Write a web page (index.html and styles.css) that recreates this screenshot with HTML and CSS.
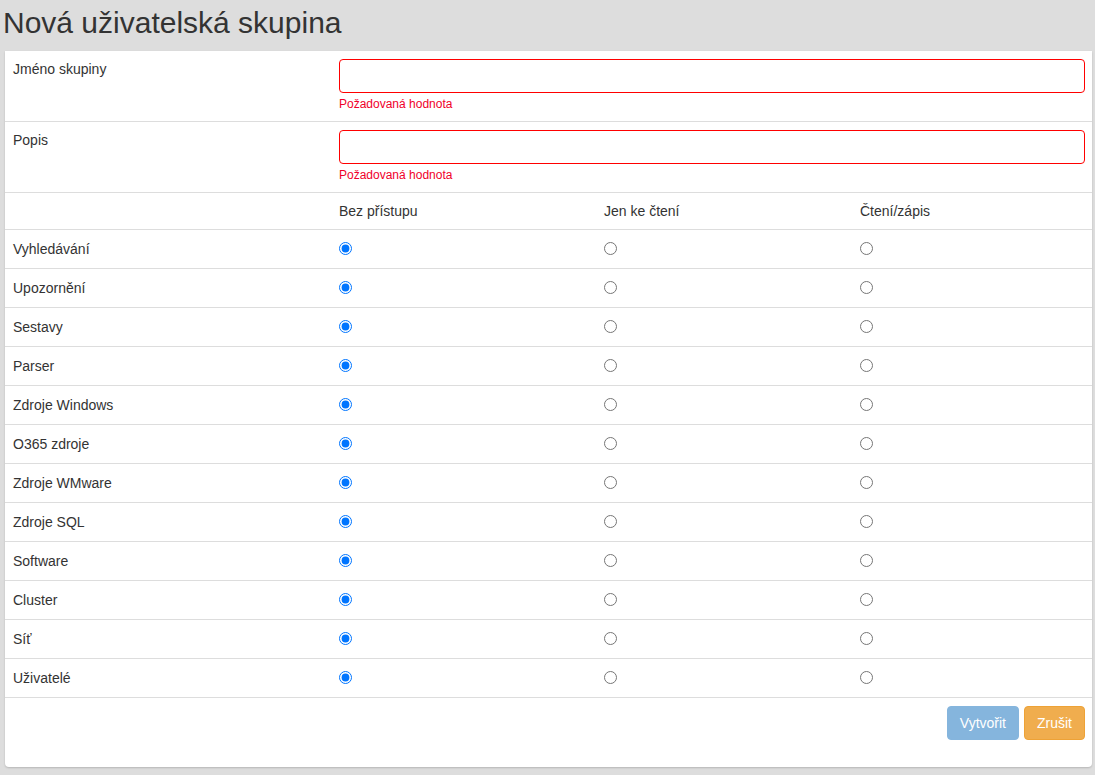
FILE: index.html
```html
<!DOCTYPE html>
<html lang="cs">
<head>
<meta charset="utf-8">
<title>Nová uživatelská skupina</title>
<link rel="stylesheet" href="styles.css">
</head>
<body>
<h1 class="page-title">Nová uživatelská skupina</h1>
<div class="card">
  <table class="grid">
    <colgroup>
      <col class="c1"><col class="c2"><col class="c3"><col class="c4">
    </colgroup>
    <tr class="field-row">
      <td class="label">Jméno skupiny</td>
      <td colspan="3" class="field">
        <input class="text-input" type="text">
        <div class="error">Požadovaná hodnota</div>
      </td>
    </tr>
    <tr class="field-row">
      <td class="label">Popis</td>
      <td colspan="3" class="field">
        <input class="text-input" type="text">
        <div class="error">Požadovaná hodnota</div>
      </td>
    </tr>
    <tr class="head-row">
      <td></td>
      <td>Bez přístupu</td>
      <td>Jen ke čtení</td>
      <td>Čtení/zápis</td>
    </tr>
    <tr class="perm-row"><td>Vyhledávání</td><td><input type="radio" name="p1" checked></td><td><input type="radio" name="p1"></td><td><input type="radio" name="p1"></td></tr>
    <tr class="perm-row"><td>Upozornění</td><td><input type="radio" name="p2" checked></td><td><input type="radio" name="p2"></td><td><input type="radio" name="p2"></td></tr>
    <tr class="perm-row"><td>Sestavy</td><td><input type="radio" name="p3" checked></td><td><input type="radio" name="p3"></td><td><input type="radio" name="p3"></td></tr>
    <tr class="perm-row"><td>Parser</td><td><input type="radio" name="p4" checked></td><td><input type="radio" name="p4"></td><td><input type="radio" name="p4"></td></tr>
    <tr class="perm-row"><td>Zdroje Windows</td><td><input type="radio" name="p5" checked></td><td><input type="radio" name="p5"></td><td><input type="radio" name="p5"></td></tr>
    <tr class="perm-row"><td>O365 zdroje</td><td><input type="radio" name="p6" checked></td><td><input type="radio" name="p6"></td><td><input type="radio" name="p6"></td></tr>
    <tr class="perm-row"><td>Zdroje WMware</td><td><input type="radio" name="p7" checked></td><td><input type="radio" name="p7"></td><td><input type="radio" name="p7"></td></tr>
    <tr class="perm-row"><td>Zdroje SQL</td><td><input type="radio" name="p8" checked></td><td><input type="radio" name="p8"></td><td><input type="radio" name="p8"></td></tr>
    <tr class="perm-row"><td>Software</td><td><input type="radio" name="p9" checked></td><td><input type="radio" name="p9"></td><td><input type="radio" name="p9"></td></tr>
    <tr class="perm-row"><td>Cluster</td><td><input type="radio" name="p10" checked></td><td><input type="radio" name="p10"></td><td><input type="radio" name="p10"></td></tr>
    <tr class="perm-row"><td>Síť</td><td><input type="radio" name="p11" checked></td><td><input type="radio" name="p11"></td><td><input type="radio" name="p11"></td></tr>
    <tr class="perm-row"><td>Uživatelé</td><td><input type="radio" name="p12" checked></td><td><input type="radio" name="p12"></td><td><input type="radio" name="p12"></td></tr>
  </table>
  <div class="actions">
    <button class="btn btn-primary" disabled>Vytvořit</button>
    <button class="btn btn-warning">Zrušit</button>
  </div>
</div>
</body>
</html>
```

FILE: styles.css
```css
html, body {
  margin: 0;
  padding: 0;
}
body {
  background: #dddddd;
  font-family: "Liberation Sans", Arial, sans-serif;
  font-size: 14px;
  color: #333333;
  padding: 0 3px 8px 5px;
}
.page-title {
  margin: 0;
  padding: 6px 0 12px 0;
  margin-left: -2px;
  font-size: 30px;
  font-weight: normal;
  line-height: 33px;
  color: #333333;
}
.card {
  background: #ffffff;
  border-radius: 0 0 4px 4px;
  box-shadow: 0 1px 2px rgba(0, 0, 0, 0.18);
}
.grid {
  width: 100%;
  border-collapse: collapse;
  table-layout: fixed;
}
.c1 { width: 326px; }
.c2 { width: 265px; }
.c3 { width: 256px; }
.c4 { width: 240px; }
.grid tr {
  border-bottom: 1px solid #dddddd;
}
.grid td {
  padding: 8px;
  line-height: 20px;
  vertical-align: top;
}
.field-row .label {
  padding: 8px;
}
.field-row .field {
  padding: 8px 7px 9px 8px;
}
.text-input {
  display: block;
  box-sizing: border-box;
  width: 100%;
  height: 34px;
  margin: 0;
  border: 1px solid #ff0000;
  border-radius: 4px;
  background: #ffffff;
  font: inherit;
  padding: 6px 12px;
  outline: none;
}
.error {
  margin-top: 3px;
  font-size: 12px;
  line-height: 16px;
  color: #f0002a;
}
.perm-row td {
  line-height: 22px;
  vertical-align: middle;
}
.perm-row input[type="radio"] {
  display: block;
  margin: 4px 0 5px 0;
  width: 13px;
  height: 13px;
}
.actions {
  display: flex;
  justify-content: flex-end;
  gap: 5px;
  padding: 8px 7px 27px 8px;
}
.btn {
  font-family: "Liberation Sans", Arial, sans-serif;
  font-size: 14px;
  line-height: 20px;
  padding: 6px 12px;
  border-radius: 4px;
  border: 1px solid transparent;
  color: #ffffff;
  cursor: pointer;
}
.btn-primary {
  background: #85b5dd;
  border-color: #85b5dd;
}
.btn-warning {
  background: #f0ad4e;
  border-color: #eea236;
}
```
